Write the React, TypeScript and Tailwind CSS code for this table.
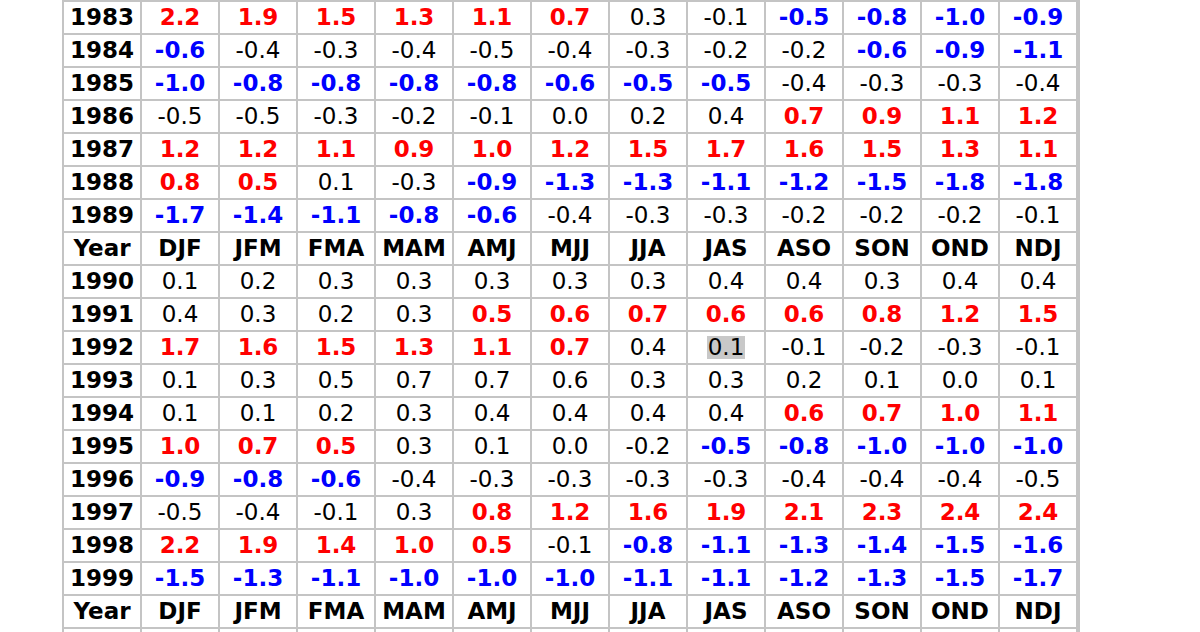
import React from "react";

const H = ["Year", "DJF", "JFM", "FMA", "MAM", "AMJ", "MJJ", "JJA", "JAS", "ASO", "SON", "OND", "NDJ"];

const raw: [string, string, string][] = [
  ["1983", "2.2 1.9 1.5 1.3 1.1 0.7 0.3 -0.1 -0.5 -0.8 -1.0 -0.9", "rrrrrrkkbbbb"],
  ["1984", "-0.6 -0.4 -0.3 -0.4 -0.5 -0.4 -0.3 -0.2 -0.2 -0.6 -0.9 -1.1", "bkkkkkkkkbbb"],
  ["1985", "-1.0 -0.8 -0.8 -0.8 -0.8 -0.6 -0.5 -0.5 -0.4 -0.3 -0.3 -0.4", "bbbbbbbbkkkk"],
  ["1986", "-0.5 -0.5 -0.3 -0.2 -0.1 0.0 0.2 0.4 0.7 0.9 1.1 1.2", "kkkkkkkkrrrr"],
  ["1987", "1.2 1.2 1.1 0.9 1.0 1.2 1.5 1.7 1.6 1.5 1.3 1.1", "rrrrrrrrrrrr"],
  ["1988", "0.8 0.5 0.1 -0.3 -0.9 -1.3 -1.3 -1.1 -1.2 -1.5 -1.8 -1.8", "rrkkbbbbbbbb"],
  ["1989", "-1.7 -1.4 -1.1 -0.8 -0.6 -0.4 -0.3 -0.3 -0.2 -0.2 -0.2 -0.1", "bbbbbkkkkkkk"],
  ["H", "", ""],
  ["1990", "0.1 0.2 0.3 0.3 0.3 0.3 0.3 0.4 0.4 0.3 0.4 0.4", "kkkkkkkkkkkk"],
  ["1991", "0.4 0.3 0.2 0.3 0.5 0.6 0.7 0.6 0.6 0.8 1.2 1.5", "kkkkrrrrrrrr"],
  ["1992", "1.7 1.6 1.5 1.3 1.1 0.7 0.4 0.1 -0.1 -0.2 -0.3 -0.1", "rrrrrrkkkkkk"],
  ["1993", "0.1 0.3 0.5 0.7 0.7 0.6 0.3 0.3 0.2 0.1 0.0 0.1", "kkkkkkkkkkkk"],
  ["1994", "0.1 0.1 0.2 0.3 0.4 0.4 0.4 0.4 0.6 0.7 1.0 1.1", "kkkkkkkkrrrr"],
  ["1995", "1.0 0.7 0.5 0.3 0.1 0.0 -0.2 -0.5 -0.8 -1.0 -1.0 -1.0", "rrrkkkkbbbbb"],
  ["1996", "-0.9 -0.8 -0.6 -0.4 -0.3 -0.3 -0.3 -0.3 -0.4 -0.4 -0.4 -0.5", "bbbkkkkkkkkk"],
  ["1997", "-0.5 -0.4 -0.1 0.3 0.8 1.2 1.6 1.9 2.1 2.3 2.4 2.4", "kkkkrrrrrrrr"],
  ["1998", "2.2 1.9 1.4 1.0 0.5 -0.1 -0.8 -1.1 -1.3 -1.4 -1.5 -1.6", "rrrrrkbbbbbb"],
  ["1999", "-1.5 -1.3 -1.1 -1.0 -1.0 -1.0 -1.1 -1.1 -1.2 -1.3 -1.5 -1.7", "bbbbbbbbbbbb"],
  ["H", "", ""],
  ["E", "", ""],
];

function Cell({ v, c, highlight }: { v: string; c: string; highlight?: boolean }) {
  let cls = "text-black font-normal";
  if (c === "r") cls = "text-[#ff0000] font-bold";
  else if (c === "b") cls = "text-[#0000ff] font-bold";
  return (
    <div className="bg-white h-[31px] flex items-center justify-center">
      <span className={cls + (highlight ? " bg-[#c8c8c8] px-[1px]" : "")}>{v}</span>
    </div>
  );
}

export default function App() {
  const cells: React.ReactNode[] = [];
  raw.forEach(([y, s, colors], ri) => {
    if (y === "H") {
      H.forEach((h, i) =>
        cells.push(
          <div key={`h${ri}-${i}`} className="bg-white h-[31px] flex items-center justify-center font-bold text-black">
            {h}
          </div>
        )
      );
    } else if (y === "E") {
      H.forEach((_, i) => cells.push(<div key={`e${ri}-${i}`} className="bg-white h-[31px]" />));
    } else {
      cells.push(
        <div key={`y${ri}`} className="bg-white h-[31px] flex items-center justify-center font-bold text-black">
          {y}
        </div>
      );
      s.split(" ").forEach((v, i) =>
        cells.push(
          <Cell key={`c${ri}-${i}`} v={v} c={colors[i]} highlight={y === "1992" && i === 7} />
        )
      );
    }
  });
  return (
    <div className="w-[1200px] h-[632px] overflow-hidden bg-white">
      <div
        className="ml-[62px] w-[1018px] grid grid-cols-[repeat(13,76px)] gap-[2px] p-[2px] bg-[#c4c4c4] text-[23px] leading-none"
        style={{ fontFamily: '"DejaVu Sans", Verdana, sans-serif' }}
      >
        {cells}
      </div>
    </div>
  );
}
